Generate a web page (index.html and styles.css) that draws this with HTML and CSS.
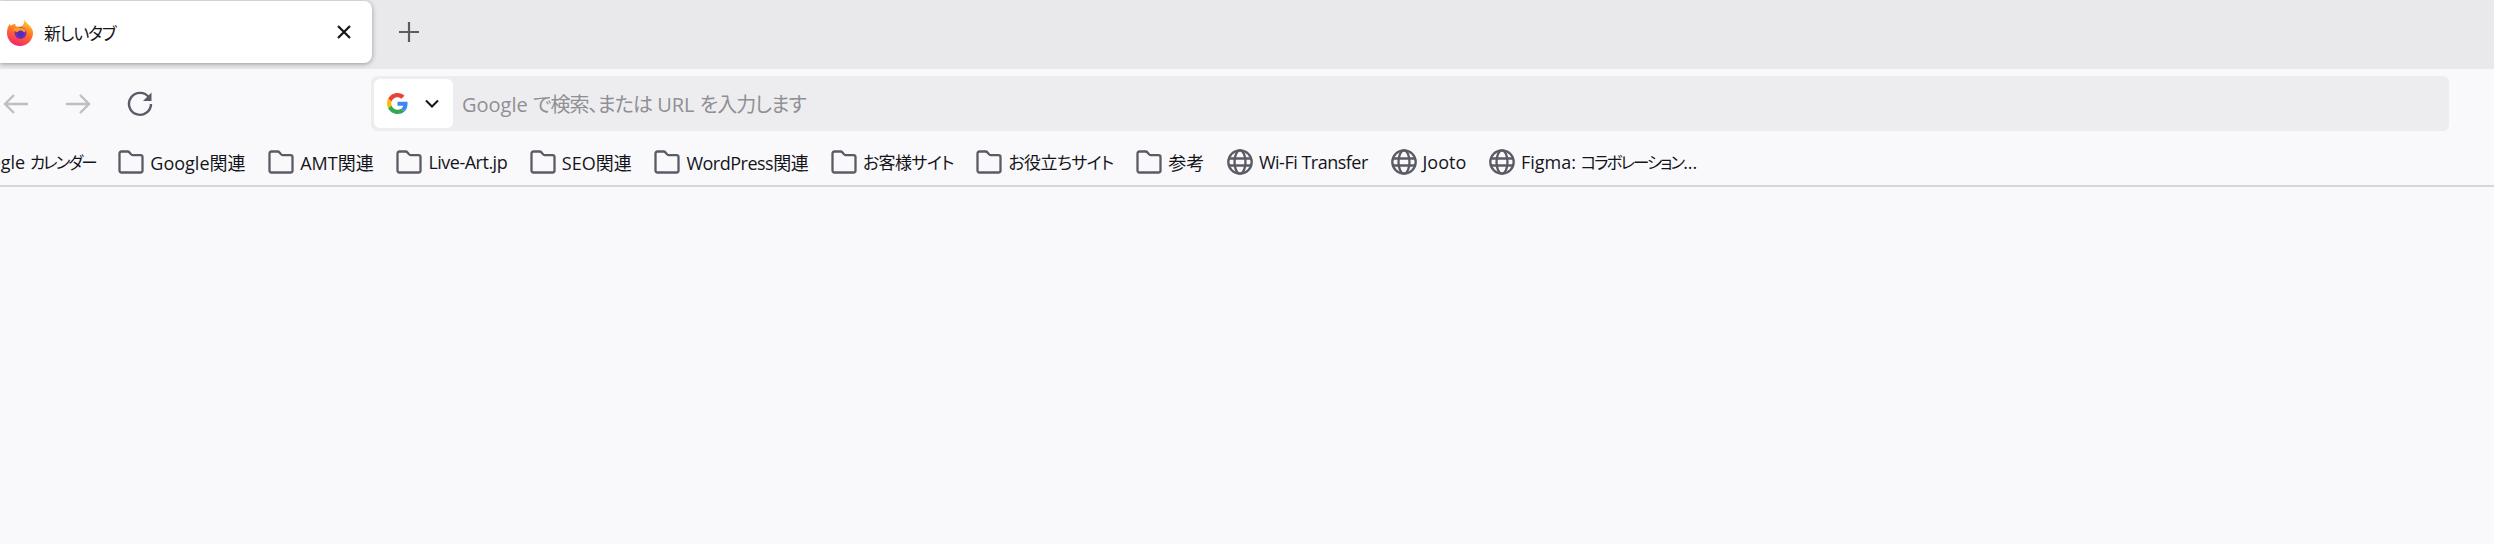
FILE: index.html
```html
<!DOCTYPE html>
<html lang="ja">
<head>
	<meta charset="UTF-8">
	<title>新しいタブ</title>
	<link rel="stylesheet" href="styles.css">
</head>
<body>
	<svg class="defs" width="0" height="0">
		<symbol id="folder" viewBox="0 0 26 26">
			<path d="M3.500 2.500h6.200c.8 0 1.300.3 1.800.9l1.600 2c.4.5.8.7 1.400.7h8c1.300 0 2 .8 2 2V21.500c0 1.300-.8 2-2 2H3.500c-1.300 0-2-.7-2-2V4.500c0-1.300.7-2 2-2z" fill="none" stroke="#5b5b66" stroke-width="2.300"/>
		</symbol>
		<symbol id="globe" viewBox="0 0 26 26">
			<g fill="none" stroke="#5b5b66" stroke-width="2.300">
				<circle cx="13" cy="13" r="11.700"/>
				<ellipse cx="13" cy="13" rx="5.500" ry="11.700"/>
				<path d="M1.500 9.500h23M1.500 16.500h23"/>
			</g>
		</symbol>
	</svg>

	<div class="tabbar">
		<div class="tab">
			<svg class="fx" viewBox="0 0 28 28">
				<defs>
					<linearGradient id="fxa" x1="0.700" y1="0" x2="0.350" y2="1">
						<stop offset="0" stop-color="#ffd23a"/>
						<stop offset="0.450" stop-color="#ff7a1f"/>
						<stop offset="1" stop-color="#f5206e"/>
					</linearGradient>
				</defs>
				<path d="M18 1c1 2.500 2.500 3.500 4.500 5.500 3 3 4.500 5.500 4.500 8.500 0 7.200-5.800 13-13 13S1 22.200 1 15c0-2.500.5-5 1.500-7l1.500-2.500.5 2.500C6 6.500 8 6 9.500 6 8.500 8 11 9 14 8.500 17 8 19 5 18 1z" fill="url(#fxa)"/>
				<circle cx="14.500" cy="15" r="6" fill="#7b2fb8"/>
				<path d="M7 11c3-2 10-2.500 12.500 1 .5 2.500-2 2.500-5.500 2.500-2.500 0-5.500-1-7-3.500z" fill="#ff9a2a"/>
				<circle cx="14.500" cy="16" r="3.500" fill="#5a2bb0"/>
			</svg>
			<span class="tab-title">新しいタブ</span>
			<svg class="tab-close" viewBox="0 0 14 14">
				<path d="M1 1l12 12M13 1L1 13" stroke="#15141a" stroke-width="2.200"/>
			</svg>
		</div>
		<svg class="newtab" viewBox="0 0 20 20">
			<path d="M10 0v20M0 10h20" stroke="#5b5b66" stroke-width="2.200"/>
		</svg>
	</div>

	<div class="navbar">
		<div class="nav-buttons">
			<svg class="nav-icon" viewBox="0 0 26 24">
				<path d="M25 12H2M11 3l-9 9 9 9" fill="none" stroke="#bdbdc2" stroke-width="2.400"/>
			</svg>
			<svg class="nav-icon" viewBox="0 0 26 24">
				<path d="M1 12h23M15 3l9 9-9 9" fill="none" stroke="#bdbdc2" stroke-width="2.400"/>
			</svg>
			<svg class="nav-icon" viewBox="0 0 26 26">
				<path d="M22 6.500A11 11 0 1 0 24 13" fill="none" stroke="#5b5b66" stroke-width="2.400"/>
				<path d="M24.500 1.500V10H16z" fill="#5b5b66"/>
			</svg>
		</div>
		<div class="urlbar">
			<div class="engine">
				<svg class="g-logo" viewBox="0 0 48 48">
					<path fill="#ea4335" d="M24 9.500c3.500 0 6.700 1.300 9.100 3.500l6.800-6.800C35.800 2.400 30.400 0 24 0 14.600 0 6.500 5.400 2.600 13.200l7.900 6.200C12.400 13.700 17.700 9.500 24 9.500z"/>
					<path fill="#4285f4" d="M47 24.500c0-1.600-.1-3.100-.4-4.500H24v9h12.900c-.6 3-2.200 5.500-4.800 7.200l7.700 6C44.300 38 47 31.800 47 24.500z"/>
					<path fill="#fbbc05" d="M10.500 28.600c-.5-1.400-.8-3-.8-4.600s.3-3.200.8-4.600l-7.900-6.200C.9 16.500 0 20.100 0 24s.9 7.500 2.600 10.800l7.900-6.200z"/>
					<path fill="#34a853" d="M24 48c6.500 0 11.900-2.100 15.800-5.800l-7.700-6c-2.100 1.400-4.900 2.300-8.100 2.300-6.300 0-11.600-4.200-13.500-9.900l-7.900 6.200C6.500 42.600 14.600 48 24 48z"/>
				</svg>
				<svg class="chevron" viewBox="0 0 14 9">
					<path d="M1 1.500l6 6 6-6" fill="none" stroke="#15141a" stroke-width="2"/>
				</svg>
			</div>
			<span class="placeholder">Google <span class="ja">で検索、または</span> URL <span class="ja">を入力します</span></span>
		</div>
	</div>

	<div class="bookmarks">
		<span class="bm bm-cut"><span>Google <span class="kana">カレンダー</span></span></span>
		<span class="bm"><svg class="bm-icon"><use href="#folder"/></svg>Google関連</span>
		<span class="bm"><svg class="bm-icon"><use href="#folder"/></svg>AMT関連</span>
		<span class="bm bm-latin"><svg class="bm-icon"><use href="#folder"/></svg>Live-Art.jp</span>
		<span class="bm"><svg class="bm-icon"><use href="#folder"/></svg>SEO関連</span>
		<span class="bm bm-latin"><svg class="bm-icon"><use href="#folder"/></svg>WordPress関連</span>
		<span class="bm bm-ja"><svg class="bm-icon"><use href="#folder"/></svg>お客様サイト</span>
		<span class="bm bm-ja"><svg class="bm-icon"><use href="#folder"/></svg>お役立ちサイト</span>
		<span class="bm"><svg class="bm-icon"><use href="#folder"/></svg>参考</span>
		<span class="bm bm-latin"><svg class="bm-icon"><use href="#globe"/></svg>Wi-Fi Transfer</span>
		<span class="bm"><svg class="bm-icon"><use href="#globe"/></svg>Jooto</span>
		<span class="bm"><svg class="bm-icon"><use href="#globe"/></svg><span>Figma: <span class="kana">コラボレーション</span>...</span></span>
	</div>
</body>
</html>
```

FILE: styles.css
```css
*{
	padding: 0;
	margin: 0;
	box-sizing: border-box;
}
html, body{
	height: 100%;
	overflow: hidden;
}
body{
	background: #f9f9fb;
	color: #15141a;
	font-family: "Open Sans", "Noto Sans CJK JP", sans-serif;
	font-size: 17px;
	font-feature-settings: "palt";
}
.defs{
	display: block;
	height: 0;
}
.tabbar{
	height: 69px;
	background: #e9e9ec;
	display: flex;
	align-items: flex-start;
}
.tab{
	width: 372px;
	height: 62px;
	margin-top: 1px;
	padding: 0 21px 0 6px;
	background: #fff;
	border-radius: 0 8px 8px 0;
	box-shadow: 0 1px 5px rgba(0,0,0,0.35);
	display: flex;
	align-items: center;
}
.fx{
	width: 28px;
	height: 28px;
	flex: none;
}
.tab-title{
	margin-left: 10px;
	font-size: 17px;
	letter-spacing: -1.100px;
	flex: 1;
}
.tab-close{
	width: 14px;
	height: 14px;
}
.newtab{
	width: 20px;
	height: 20px;
	margin: 22px 0 0 27px;
}
.navbar{
	height: 69px;
	display: flex;
	align-items: center;
}
.nav-buttons{
	width: 371px;
	padding: 0 0 0 3px;
	display: flex;
	align-items: center;
	gap: 36px;
}
.nav-icon{
	width: 26px;
	height: 26px;
}
.urlbar{
	width: 2078px;
	height: 55px;
	padding: 3px;
	background: #ededf0;
	border-radius: 6px;
	display: flex;
	align-items: center;
}
.engine{
	width: 79px;
	height: 49px;
	background: #fff;
	border-radius: 6px;
	padding: 0 14px 0 13px;
	display: flex;
	align-items: center;
	justify-content: space-between;
}
.g-logo{
	width: 21px;
	height: 21px;
}
.chevron{
	width: 14px;
	height: 9px;
}
.placeholder{
	margin-left: 9px;
	font-size: 20px;
	color: #8f8f94;
}
.ja{
	letter-spacing: -1px;
}
.bookmarks{
	height: 49px;
	border-bottom: 2px solid #d6d6da;
	display: flex;
	align-items: center;
	gap: 22.700px;
	white-space: nowrap;
	overflow: hidden;
	font-size: 18px;
}
.bm{
	display: flex;
	align-items: center;
	gap: 6px;
	flex: none;
}
.bm-latin{
	letter-spacing: -0.500px;
}
.bm-ja{
	font-size: 17px;
	letter-spacing: -0.600px;
}
.kana{
	font-size: 16.500px;
	letter-spacing: -2px;
}
.bm-cut{
	margin-left: -34px;
}
.bm-icon{
	width: 26px;
	height: 26px;
}
```
